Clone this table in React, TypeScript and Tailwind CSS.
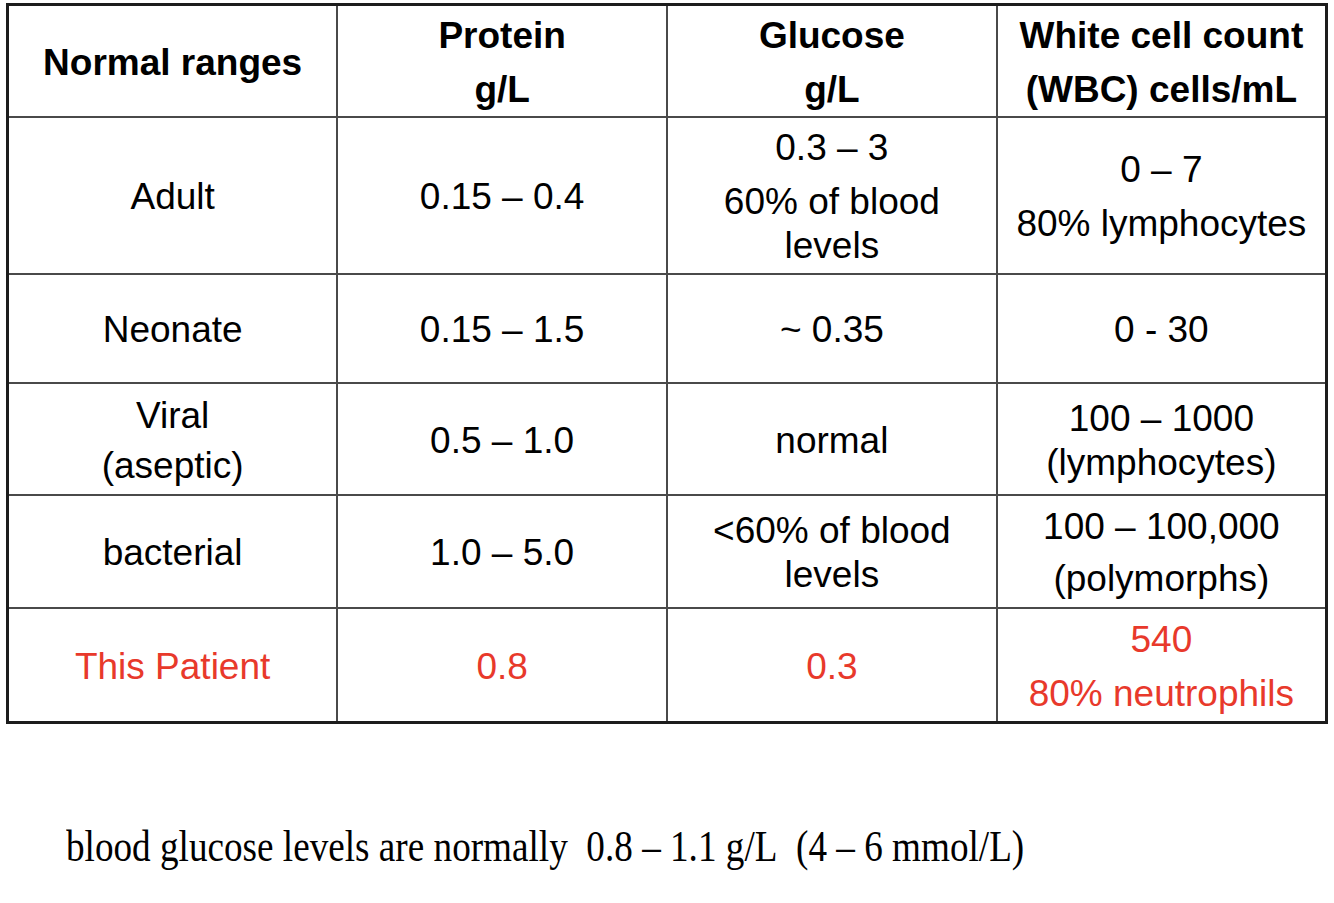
import React from 'react';

type Cell = { lines: string[]; gap?: number };

const HEADERS: Cell[] = [
  { lines: ['Normal ranges'] },
  { lines: ['Protein', 'g/L'], gap: 10 },
  { lines: ['Glucose', 'g/L'], gap: 10 },
  { lines: ['White cell count', '(WBC) cells/mL'], gap: 10 },
];

const ROWS: { h: string; red?: boolean; cells: Cell[] }[] = [
  {
    h: 'h-[157px]',
    cells: [
      { lines: ['Adult'] },
      { lines: ['0.15 – 0.4'] },
      { lines: ['0.3 – 3', '60% of blood', 'levels'] },
      { lines: ['0 – 7', '80% lymphocytes'], gap: 10 },
    ],
  },
  {
    h: 'h-[109px]',
    cells: [
      { lines: ['Neonate'] },
      { lines: ['0.15 – 1.5'] },
      { lines: ['~ 0.35'] },
      { lines: ['0 - 30'] },
    ],
  },
  {
    h: 'h-[112px]',
    cells: [
      { lines: ['Viral', '(aseptic)'], gap: 6 },
      { lines: ['0.5 – 1.0'] },
      { lines: ['normal'] },
      { lines: ['100 – 1000', '(lymphocytes)'] },
    ],
  },
  {
    h: 'h-[113px]',
    cells: [
      { lines: ['bacterial'] },
      { lines: ['1.0 – 5.0'] },
      { lines: ['<60% of blood', 'levels'] },
      { lines: ['100 – 100,000', '(polymorphs)'], gap: 8 },
    ],
  },
  {
    h: 'h-[115px]',
    red: true,
    cells: [
      { lines: ['This Patient'] },
      { lines: ['0.8'] },
      { lines: ['0.3'] },
      { lines: ['540', '80% neutrophils'], gap: 10 },
    ],
  },
];

function CellBody({ cell }: { cell: Cell }) {
  // glucose adult cell: first line is its own paragraph, the rest wraps
  if (cell.lines.length === 3) {
    return (
      <div className="flex flex-col items-center pt-[4px]">
        <div className="leading-[44px] mb-[10px]">{cell.lines[0]}</div>
        <div className="leading-[44px]">{cell.lines[1]}</div>
        <div className="leading-[44px]">{cell.lines[2]}</div>
      </div>
    );
  }
  return (
    <div className="flex flex-col items-center pt-[4px]" style={{ gap: cell.gap ?? 0 }}>
      {cell.lines.map((l, i) => (
        <div key={i} className="leading-[44px] whitespace-nowrap">
          {l}
        </div>
      ))}
    </div>
  );
}

export default function App() {
  return (
    <div className="w-[1334px] h-[903px] bg-white overflow-hidden font-['Liberation_Sans',Arial,sans-serif] text-black">
      <div className="pl-[6px] pt-[3px]">
        <table className="w-[1322px] table-fixed border-collapse border-[3px] border-[#1c1c1c] text-[37px]">
          <thead>
            <tr className="h-[112px]">
              {HEADERS.map((c, i) => (
                <th key={i} className="border-2 border-[#4a4a4a] font-bold text-center align-middle p-0">
                  <CellBody cell={c} />
                </th>
              ))}
            </tr>
          </thead>
          <tbody>
            {ROWS.map((r, ri) => (
              <tr key={ri} className={`${r.h} ${r.red ? 'text-[#e8392b]' : ''}`}>
                {r.cells.map((c, ci) => (
                  <td key={ci} className="border-2 border-[#4a4a4a] text-center align-middle p-0">
                    <CellBody cell={c} />
                  </td>
                ))}
              </tr>
            ))}
          </tbody>
        </table>
      </div>

      <div className="mt-[97px] pl-[66px]">
        <div className="origin-left scale-x-[0.845] whitespace-nowrap font-['Liberation_Serif','Times_New_Roman',serif] text-[44px] leading-[52px]">
          blood glucose levels are normally&nbsp; 0.8 – 1.1 g/L&nbsp; (4 – 6 mmol/L)
        </div>
      </div>
    </div>
  );
}
